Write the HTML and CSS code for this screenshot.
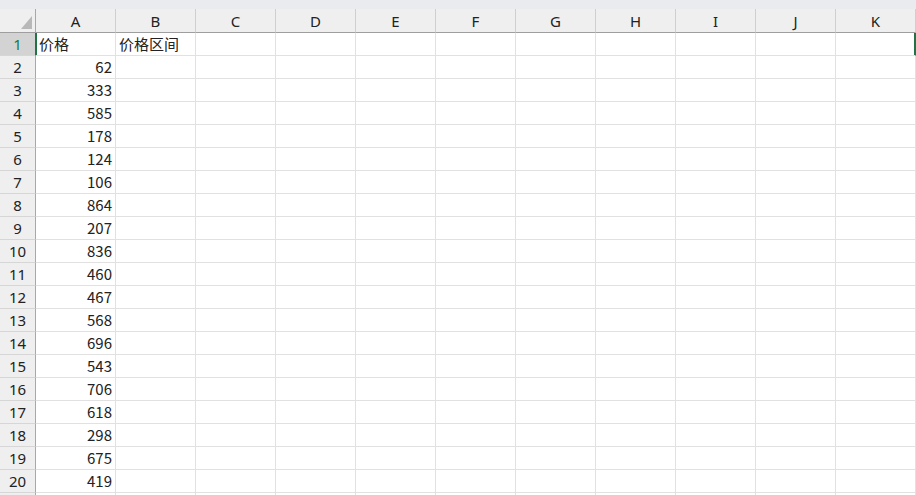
FILE: index.html
```html
<!DOCTYPE html>
<html lang="zh-CN">
<head>
  <meta charset="UTF-8" />
  <title>价格区间</title>
  <link rel="stylesheet" href="styles.css">
</head>
<body>
  <div class="topbar"></div>
  <table class="sheet">
    <thead>
      <tr>
        <th class="corner"><span class="tri"></span></th>
        <th>A</th><th>B</th><th>C</th><th>D</th><th>E</th><th>F</th><th>G</th><th>H</th><th>I</th><th>J</th><th>K</th>
      </tr>
    </thead>
    <tbody>
      <tr class="sel"><th>1</th><td class="first">价格</td><td>价格区间</td><td></td><td></td><td></td><td></td><td></td><td></td><td></td><td></td><td class="last"></td></tr>
      <tr><th>2</th><td class="num">62</td><td></td><td></td><td></td><td></td><td></td><td></td><td></td><td></td><td></td><td></td></tr>
      <tr><th>3</th><td class="num">333</td><td></td><td></td><td></td><td></td><td></td><td></td><td></td><td></td><td></td><td></td></tr>
      <tr><th>4</th><td class="num">585</td><td></td><td></td><td></td><td></td><td></td><td></td><td></td><td></td><td></td><td></td></tr>
      <tr><th>5</th><td class="num">178</td><td></td><td></td><td></td><td></td><td></td><td></td><td></td><td></td><td></td><td></td></tr>
      <tr><th>6</th><td class="num">124</td><td></td><td></td><td></td><td></td><td></td><td></td><td></td><td></td><td></td><td></td></tr>
      <tr><th>7</th><td class="num">106</td><td></td><td></td><td></td><td></td><td></td><td></td><td></td><td></td><td></td><td></td></tr>
      <tr><th>8</th><td class="num">864</td><td></td><td></td><td></td><td></td><td></td><td></td><td></td><td></td><td></td><td></td></tr>
      <tr><th>9</th><td class="num">207</td><td></td><td></td><td></td><td></td><td></td><td></td><td></td><td></td><td></td><td></td></tr>
      <tr><th>10</th><td class="num">836</td><td></td><td></td><td></td><td></td><td></td><td></td><td></td><td></td><td></td><td></td></tr>
      <tr><th>11</th><td class="num">460</td><td></td><td></td><td></td><td></td><td></td><td></td><td></td><td></td><td></td><td></td></tr>
      <tr><th>12</th><td class="num">467</td><td></td><td></td><td></td><td></td><td></td><td></td><td></td><td></td><td></td><td></td></tr>
      <tr><th>13</th><td class="num">568</td><td></td><td></td><td></td><td></td><td></td><td></td><td></td><td></td><td></td><td></td></tr>
      <tr><th>14</th><td class="num">696</td><td></td><td></td><td></td><td></td><td></td><td></td><td></td><td></td><td></td><td></td></tr>
      <tr><th>15</th><td class="num">543</td><td></td><td></td><td></td><td></td><td></td><td></td><td></td><td></td><td></td><td></td></tr>
      <tr><th>16</th><td class="num">706</td><td></td><td></td><td></td><td></td><td></td><td></td><td></td><td></td><td></td><td></td></tr>
      <tr><th>17</th><td class="num">618</td><td></td><td></td><td></td><td></td><td></td><td></td><td></td><td></td><td></td><td></td></tr>
      <tr><th>18</th><td class="num">298</td><td></td><td></td><td></td><td></td><td></td><td></td><td></td><td></td><td></td><td></td></tr>
      <tr><th>19</th><td class="num">675</td><td></td><td></td><td></td><td></td><td></td><td></td><td></td><td></td><td></td><td></td></tr>
      <tr><th>20</th><td class="num">419</td><td></td><td></td><td></td><td></td><td></td><td></td><td></td><td></td><td></td><td></td></tr>
      <tr><th></th><td></td><td></td><td></td><td></td><td></td><td></td><td></td><td></td><td></td><td></td><td></td></tr>
    </tbody>
  </table>
</body>
</html>
```

FILE: styles.css
```css
* {
  box-sizing: border-box;
}

body {
  margin: 0;
  background: #fff;
  font-family: "Noto Sans", "Noto Sans CJK SC", sans-serif;
  color: #222;
  overflow: hidden;
}

.topbar {
  height: 9px;
  background: #e9ebee;
}

.sheet {
  border-collapse: separate;
  border-spacing: 0;
  table-layout: fixed;
  width: 916px;
}

.sheet th,
.sheet td {
  padding: 0;
  height: 23px;
  border-right: 1px solid #e1e1e1;
  border-bottom: 1px solid #e1e1e1;
  font-size: 15px;
  font-weight: normal;
  white-space: nowrap;
  overflow: hidden;
}

/* column headers */
thead th {
  width: 80px;
  height: 24px !important;
  background: #efefef;
  border-right-color: #cfcfcf !important;
  border-bottom-color: #9e9e9e !important;
  text-align: center;
  font-size: 15px;
  color: #222;
}

thead th.corner {
  width: 36px;
  position: relative;
  border-right-color: #a8a8a8 !important;
}

.tri {
  position: absolute;
  right: 3px;
  bottom: 3px;
  width: 0;
  height: 0;
  border-left: 11px solid transparent;
  border-bottom: 13px solid #b8b8b8;
}

/* row headers */
tbody th {
  background: #efefef;
  border-right-color: #a8a8a8 !important;
  border-bottom-color: #d6d6d6 !important;
  text-align: center;
  font-family: "Noto Sans", sans-serif;
}

.sheet td {
  font-family: "Noto Sans CJK SC", sans-serif;
  padding: 0 3px;
  line-height: 22px;
}

td.num {
  text-align: right;
}

/* selected row 1 */
tr.sel th {
  background: #d3d3d3;
  color: #137b45;
  border-right-color: #217346 !important;
}

tr.sel td.first {
  box-shadow: inset 1px 0 #217346;
}

tr.sel td.last {
  border-right-color: #217346;
  box-shadow: inset -1px 0 #217346;
}
```
